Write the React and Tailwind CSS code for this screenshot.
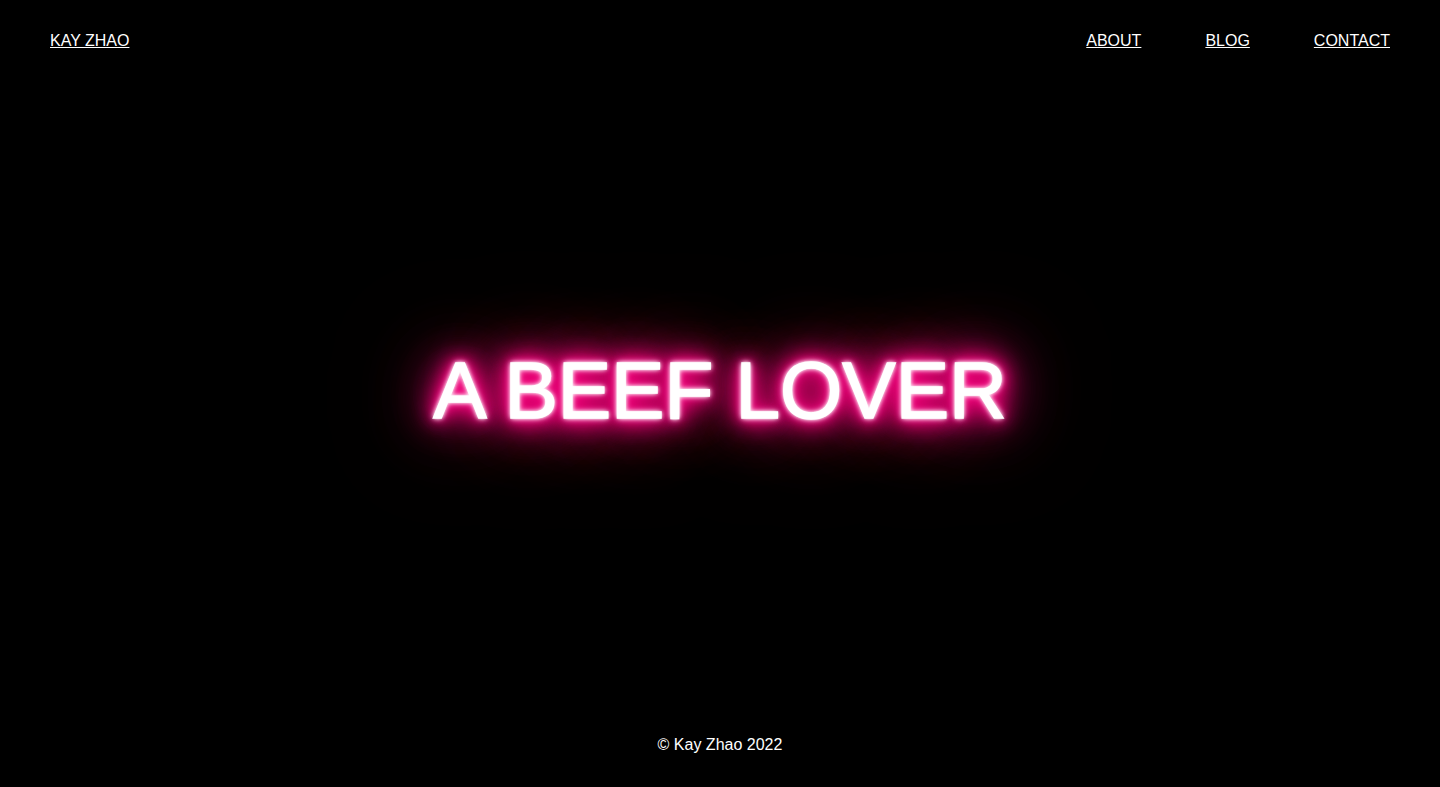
import React from "react";

const links = ["ABOUT", "BLOG", "CONTACT"];

const App = () => {
  return (
    <div className="min-h-screen flex flex-col bg-black text-white font-['Liberation_Sans',Arial,sans-serif]">
      <header className="h-20 pt-0.5 px-[50px] flex items-center justify-between text-base">
        <a href="#" className="underline">
          KAY ZHAO
        </a>
        <nav className="flex gap-16">
          {links.map((item) => (
            <a key={item} href="#" className="underline">
              {item}
            </a>
          ))}
        </nav>
      </header>

      <main className="flex-1 flex items-center justify-center">
        <h1 className="text-[80px] leading-none font-normal text-white [-webkit-text-stroke:1.5px_#fff] [text-shadow:0_0_2px_#fff,0_0_4px_#fff,0_0_6px_#fff,0_0_10px_#ff2a9a,0_0_14px_#ff0080,0_0_20px_#ff0080,0_0_24px_#ff0080,0_0_30px_#ff0080,0_0_45px_#ff0080,0_0_60px_#e00070,0_0_80px_#d00068,0_0_110px_#a00050]">
          A BEEF LOVER
        </h1>
      </main>

      <footer className="h-[86px] pt-0.5 flex items-center justify-center text-base">
        © Kay Zhao 2022
      </footer>
    </div>
  );
};

export default App;
